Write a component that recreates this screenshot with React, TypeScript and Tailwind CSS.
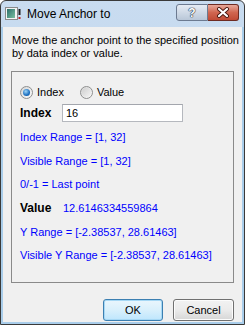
import React from "react";

const F = { fontFamily: '"Liberation Sans", Arial, sans-serif' };

function Radio({ checked }: { checked: boolean }) {
  return (
    <div className="w-[13px] h-[13px] rounded-full border border-[#8e8f8f] bg-gradient-to-br from-[#d6d6d6] to-[#fbfbfb] flex items-center justify-center">
      {checked ? (
        <div className="w-[7px] h-[7px] rounded-full bg-[radial-gradient(circle_at_40%_35%,#9fd6f8,#1b6fc0_60%,#0d4f94)]" />
      ) : (
        <div className="w-[9px] h-[9px] rounded-full bg-gradient-to-br from-[#cfcfcf] to-[#f4f4f4]" />
      )}
    </div>
  );
}

export default function App() {
  return (
    <div
      className="w-[245px] h-[325px] border border-[#3a3a3a] rounded-t-[6px] bg-gradient-to-b from-[#c9dcf0] to-[#b8cfe8] flex flex-col overflow-hidden"
      style={F}
    >
      {/* title bar */}
      <div className="h-[26px] flex items-start pl-[4px] pr-[5px] shrink-0">
        <div className="mt-[6px] w-[16px] h-[13px]">
          <svg width="16" height="13" viewBox="0 0 16 13">
            <rect x="0.5" y="0.5" width="12" height="12" fill="#f4f4f4" stroke="#8a8a8a" />
            <rect x="2" y="2" width="8" height="9" fill="url(#g)" />
            <defs>
              <linearGradient id="g" x1="0" y1="0" x2="1" y2="1">
                <stop offset="0" stopColor="#2c6e6a" />
                <stop offset="1" stopColor="#7ac0a0" />
              </linearGradient>
            </defs>
            <rect x="13.5" y="2" width="2" height="6" fill="#202020" />
            <rect x="13.5" y="10" width="2" height="2" fill="#c02020" />
          </svg>
        </div>
        <div className="ml-[6px] mt-[6px] text-[12px] leading-[14px] text-black">Move Anchor to</div>
        <div className="flex-1" />
        <div className="mt-[3px] flex h-[17px]">
          <div className="w-[32px] h-[17px] rounded-l-[3px] border border-[#6c7a90] bg-gradient-to-b from-[#e6ecf4] via-[#cfd9e6] to-[#b9c7d8] flex items-center justify-center">
            <span className="text-white font-bold text-[12px] leading-[12px] [text-shadow:0_0_1px_#1b2a40,0_0_1px_#1b2a40,0_0_1px_#1b2a40]">?</span>
          </div>
          <div className="w-[31px] h-[17px] rounded-r-[3px] border border-l-0 border-[#6e2b22] bg-gradient-to-b from-[#e7a89a] via-[#d06650] to-[#c04a35] flex items-center justify-center">
            <svg width="14" height="11" viewBox="0 0 14 11">
              <path d="M3 2 L11 9 M11 2 L3 9" stroke="#4a1810" strokeWidth="4" strokeLinecap="round" />
              <path d="M3 2 L11 9 M11 2 L3 9" stroke="#ffffff" strokeWidth="2.2" strokeLinecap="round" />
            </svg>
          </div>
        </div>
      </div>

      {/* frame + body */}
      <div className="flex-1 px-[2px] pb-[2px] bg-[#a9cdea] flex">
        <div className="flex-1 bg-[#f0f0f0] flex flex-col pt-[7px]">
          <div className="pl-[9px] text-[11px] leading-[13px] text-black">
            Move the anchor point to the specified position
            <br />
            by data index or value.
          </div>

          <div className="mt-[11px] mx-[8px] h-[212px] border border-[#8a8a8a] pl-[8px] flex flex-col text-[11px] leading-[13px]">
            <div className="mt-[14px] flex items-center h-[13px]">
              <Radio checked />
              <span className="ml-[4px] text-black">Index</span>
              <div className="ml-[16px]">
                <Radio checked={false} />
              </div>
              <span className="ml-[4px] text-black">Value</span>
            </div>
            <div className="mt-[5px] flex items-center h-[18px]">
              <span className="font-bold text-black w-[42px] text-[12px]">Index</span>
              <div className="w-[121px] h-[18px] bg-white border border-[#b5b8be] border-t-[#a3a6ad] flex items-center pl-[3px] text-black">
                16
              </div>
            </div>
            <div className="mt-[9px] text-[#0000ff]">Index Range = [1, 32]</div>
            <div className="mt-[11px] text-[#0000ff]">Visible Range = [1, 32]</div>
            <div className="mt-[10px] text-[#0000ff]">0/-1 = Last point</div>
            <div className="mt-[11px] flex">
              <span className="font-bold text-black w-[43px] text-[12px]">Value</span>
              <span className="text-[#0000ff]">12.6146334559864</span>
            </div>
            <div className="mt-[11px] text-[#0000ff]">Y Range = [-2.38537, 28.61463]</div>
            <div className="mt-[10px] text-[#0000ff]">Visible Y Range = [-2.38537, 28.61463]</div>
          </div>

          <div className="mt-[16px] flex justify-end gap-[10px] pr-[8px]">
            <div className="w-[60px] h-[22px] rounded-[3px] border border-[#3c7fb1] bg-gradient-to-b from-[#eaf6fd] via-[#d9f0fc] to-[#bee6fd] shadow-[inset_0_0_0_1px_#a6d8f5] flex items-center justify-center text-[11px] text-black">
              OK
            </div>
            <div className="w-[61px] h-[22px] rounded-[3px] border border-[#707070] bg-gradient-to-b from-[#f2f2f2] via-[#ebebeb] to-[#d6d6d6] shadow-[inset_0_0_0_1px_#fcfcfc] flex items-center justify-center text-[11px] text-black">
              Cancel
            </div>
          </div>
        </div>
      </div>
    </div>
  );
}
